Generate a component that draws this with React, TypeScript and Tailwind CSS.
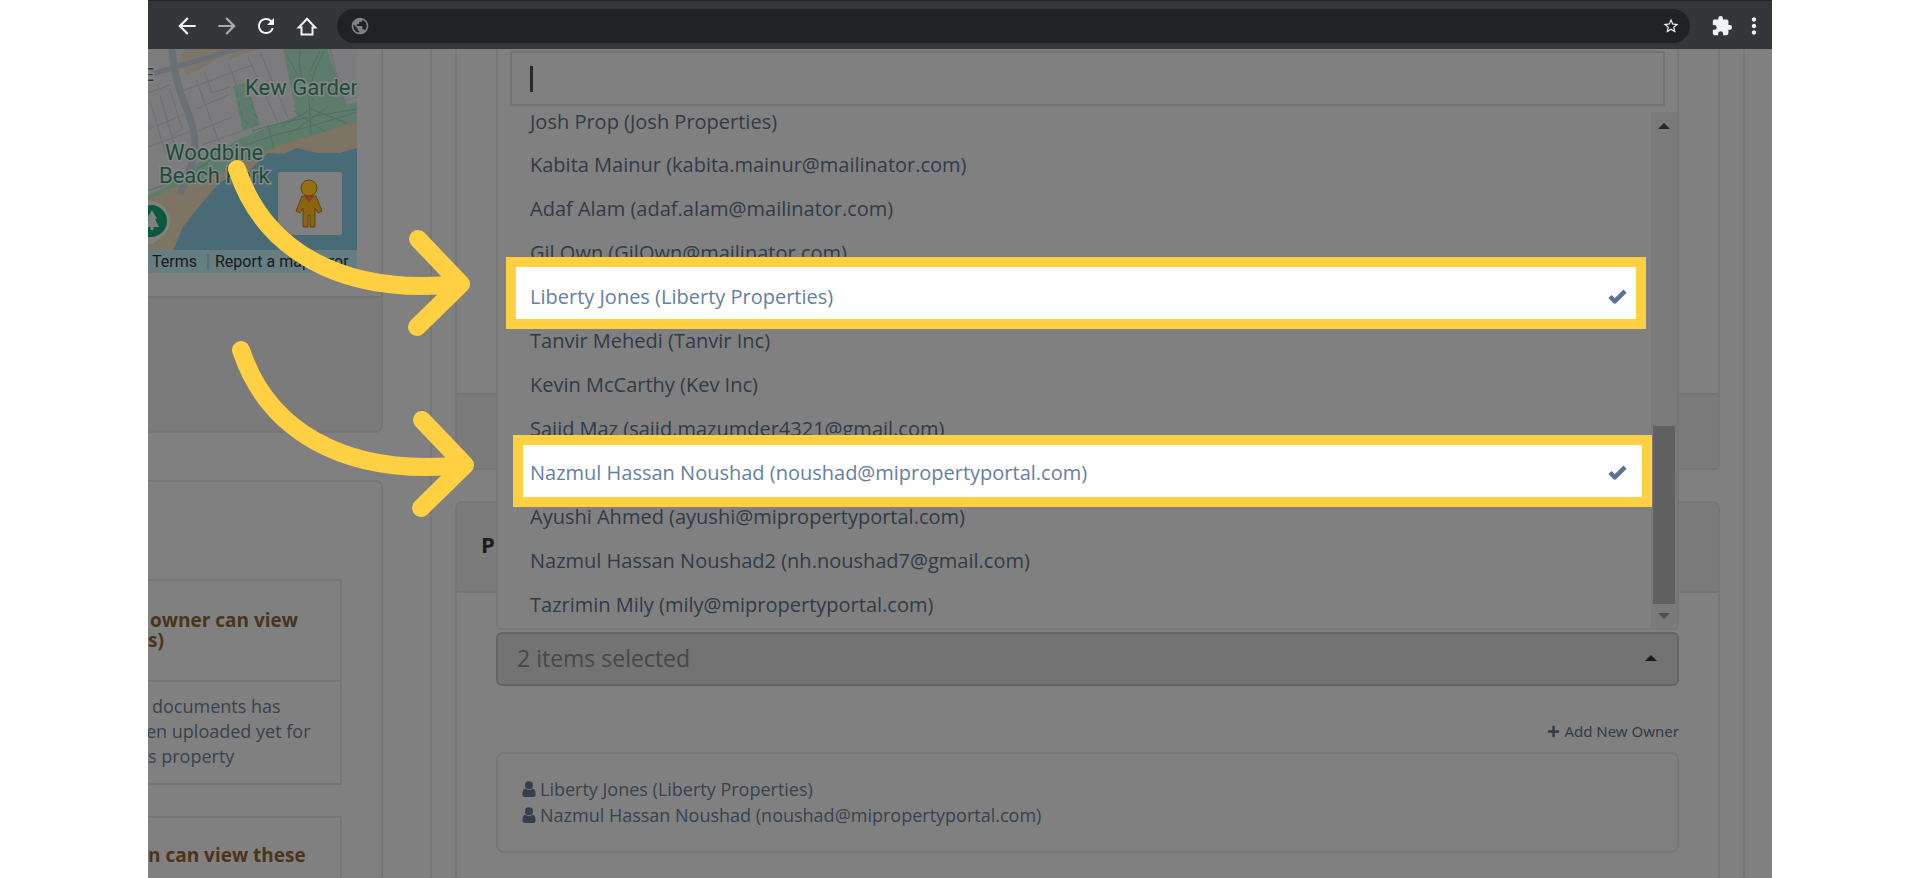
import React from 'react';
import { FaPlus } from 'react-icons/fa';
import { MdArrowBack, MdArrowForward, MdExtension, MdMoreVert, MdPublic, MdRefresh, MdStarBorder } from 'react-icons/md';

const owners = [
  { label: 'Josh Prop (Josh Properties)' },
  { label: 'Kabita Mainur (kabita.mainur@mailinator.com)' },
  { label: 'Adaf Alam (adaf.alam@mailinator.com)' },
  { label: 'Gil Own (GilOwn@mailinator.com)' },
  { label: 'Liberty Jones (Liberty Properties)', frame: '-top-[18px] -left-[8px] right-[5px]' },
  { label: 'Tanvir Mehedi (Tanvir Inc)' },
  { label: 'Kevin McCarthy (Kev Inc)' },
  { label: 'Sajid Maz (sajid.mazumder4321@gmail.com)' },
  { label: 'Nazmul Hassan Noushad (noushad@mipropertyportal.com)', frame: '-top-[16px] -left-px -right-px' },
  { label: 'Ayushi Ahmed (ayushi@mipropertyportal.com)' },
  { label: 'Nazmul Hassan Noushad2 (nh.noushad7@gmail.com)' },
  { label: 'Tazrimin Mily (mily@mipropertyportal.com)' },
];

const selected = owners.filter((o) => o.frame);

const UserIcon = () => (
  <svg viewBox="0 0 14 16" className="w-[14px] h-4 shrink-0" fill="#34404f" aria-hidden="true">
    <circle cx="7" cy="4.2" r="4" />
    <path d="M3.6 7.4C1 8 .4 10.6.4 13.2.4 14.9 1.500 16 3 16h8c1.500 0 2.600-1.100 2.600-2.800 0-2.600-.6-5.200-3.200-5.800C9.500 8.400 8.300 9 7 9s-2.500-.6-3.400-1.600z" />
  </svg>
);

const CheckIcon = () => (
  <svg viewBox="0 0 19 16" className="w-[19px] h-4 shrink-0" fill="none" stroke="#587396" strokeWidth="4.500" strokeLinejoin="round" aria-hidden="true">
    <path d="M2 7.500L6.800 12.300 17 2.200" />
  </svg>
);

const Toolbar = () => (
  <header className="flex items-center h-[49px] shrink-0 pt-0.5 pl-[26px] pr-[5px] bg-[#35363a] border-t border-[#202124] text-[#f1f3f4]">
    <div className="flex items-center gap-[14px]">
      <button aria-label="Back"><MdArrowBack size={26} /></button>
      <button aria-label="Forward" className="text-[#a9abae]"><MdArrowForward size={26} /></button>
      <button aria-label="Reload"><MdRefresh size={24} /></button>
      <button aria-label="Home" className="ml-0.5">
        <svg width="26" height="26" viewBox="0 0 26 26" fill="none" stroke="currentColor" strokeWidth="2">
          <path d="M4.800 14.500L13 5.700l8.200 8.800H18.500V21.500H7.500V14.500z" />
        </svg>
      </button>
    </div>
    <div className="flex items-center flex-1 h-[34px] ml-[17px] pl-[13px] pr-[10px] rounded-full bg-[#202124]">
      <MdPublic size={20} className="text-[#7d8084]" />
      <input aria-label="Address" className="flex-1 h-full px-2 bg-transparent outline-none" />
      <button aria-label="Bookmark"><MdStarBorder size={18} /></button>
    </div>
    <button aria-label="Extensions" className="ml-[21px]"><MdExtension size={22} /></button>
    <button aria-label="Menu" className="ml-2"><MdMoreVert size={26} /></button>
  </header>
);

const AreaMap = () => (
  <div className="relative w-[209px] h-[224px] overflow-hidden">
    <svg viewBox="0 0 209 224" className="w-full h-full" aria-label="Map">
      <rect width="209" height="224" fill="#7c7c7e" />
      <path d="M35 0L85 0 60 16 38 26 32 14zM90 0h20L78 12z" fill="#7d7668" />
      <g fill="#5d7c6b">
        <path d="M135 0h44l20 56 10-3v24l-44 11-40 12-66 30-59 22v-6l18-8 42-32 40-20 49-19z" />
        <path d="M85 37l14-4 13 43-17 6z" />
      </g>
      <path d="M209 73l-44 13-40 12-33 18-33 13-34 9-25 13v73h209z" fill="#7d7463" />
      <path d="M209 99l-17 5h-23l-20-5-14 6-15-1-18 17-30 12-18 21-19 24-10 24-8 22h192z" fill="#486b77" />
      <g fill="none" stroke="#6b7077">
        <path d="M24 0q2 30 14 58t8 50l-14 38" strokeWidth="7" />
        <path d="M0 26L110-6" strokeWidth="5" />
        <path d="M0 44l22-8M34 42l70-26M48 60l32-14M50 82l34-14M54 96l40-14M0 80l40-16M0 98l44-16" strokeWidth="1" />
        <path d="M2 52l16 54M12 46l16 56M22 40l12 40q-14 6-8 14l6 16M48 30l24 66M56 22l8 22 18-6M80 14l30 80M100 8l30 66M112 3l28 66M182 0l14 52 13-4" strokeWidth="1" />
      </g>
      <g fill="none" stroke="#4f705f" strokeWidth="1">
        <path d="M139 6l22 42 2 38M152 0q-4 30 14 52M176 2q-14 24-14 46M162 22l10-20M163 60l-30 18M163 60l36 14M120 76l6 24M104 82q30-10 105-22M140 86l40-28M176 82l-30-20M60 112q50-24 100-34l49-15M0 142q30-10 60-28" />
        <path d="M89 42q4 34 15 34t2-12l-8-28" strokeDasharray="6 4" />
      </g>
      <g fill="#1c4d3a" stroke="#858786" strokeWidth="3" paintOrder="stroke" className="font-['Roboto'] text-[22px]">
        <text x="97" y="46">Kew Garden</text>
        <text x="17" y="111">Woodbine</text>
        <text x="11" y="134">Beach Park</text>
        <text x="-4" y="32" fill="#33363b" className="text-[18px]">E</text>
      </g>
      <path d="M3 152a20 20 0 0 1 14 33L3 196l-14-11a20 20 0 0 1 14-33z" fill="#808080" />
      <circle cx="3" cy="172" r="16" fill="#0b5a40" />
      <path d="M4 161l5 9H7l4 8H5.500v3h-3v-3H-3l4-8h-2z" fill="#808080" />
      <rect x="130" y="123" width="64" height="63" rx="2" fill="#808080" />
      <g stroke="#5c4510" strokeWidth="1">
        <path d="M154 147h14l6 15-4 2-3-5v19h-5v-12h-2v12h-5v-19l-3 5-4-2z" fill="#8a6410" />
        <circle cx="161" cy="139" r="8" fill="#94700f" />
      </g>
      <path d="M156 147h10l-5 7z" fill="#8a3f1a" />
    </svg>
    <div className="absolute inset-x-0 bottom-0 flex h-[23px] items-center bg-[#667d82] font-['Roboto'] text-base leading-none text-[#1a1a1a]">
      <a href="#" className="w-[59px] pl-1">Terms</a>
      <a href="#" className="flex-1 pl-1.5 border-l-2 border-[#52727c] whitespace-nowrap">Report a map error</a>
    </div>
  </div>
);

const Sidebar = () => (
  <aside className="w-[235px] shrink-0 overflow-hidden">
    <section className="border-r-2 border-b-2 border-[#767676] rounded-br-lg">
      <AreaMap />
      <div className="h-[135px] mt-[23px] border-t-2 border-[#747474] bg-[#7b7b7b] rounded-br-lg" />
    </section>
    <section className="h-[600px] mt-[47px] pt-[97px] border-t-2 border-r-2 border-[#767676] rounded-tr-lg">
      <div className="w-[194px] border-2 border-l-0 border-[#757575]">
        <h3 className="h-[101px] pt-[29px] border-b-2 border-[#757575] text-[19px] leading-5 font-bold text-[#493518] whitespace-nowrap">
          <span className="block pl-0.5">owner can view</span>
          s)
        </h3>
        <p className="h-[101px] pt-3 text-lg leading-[25px] text-[#37424f] whitespace-nowrap">
          <span className="block pl-1">documents has</span>
          <span className="block -ml-0.5">en uploaded yet for</span>
          s property
        </p>
      </div>
      <div className="w-[194px] h-[200px] mt-[31px] pt-[27px] border-2 border-l-0 border-[#757575]">
        <h3 className="text-[19px] leading-5 font-bold text-[#493518] whitespace-nowrap">n can view these</h3>
      </div>
    </section>
  </aside>
);

const OwnerList = () => (
  <div className="absolute inset-x-[41px] top-0 flex flex-col h-[581px] border-2 border-t-0 border-[#767777] rounded-b-md bg-[#808080]">
    <input aria-label="Search owners" className="h-[55px] mt-[2px] mx-3 px-4 border-2 border-[#727374] outline-none" />
    <span className="absolute left-[32px] top-[17px] w-[3px] h-[26px] bg-[#2a2a2a]" />
    <div className="flex flex-1 min-h-0 mt-[6px]">
      <ul className="flex flex-col flex-1 justify-end pl-4 pb-px">
        {owners.map((o, i) => (
          <li key={o.label} className={i === 0 ? 'h-[32px]' : 'relative h-11'}>
            {o.frame && <span className={`absolute z-10 h-[72px] border-[10px] border-[#ffd042] bg-white ${o.frame}`} />}
            <button
              className={`flex items-center justify-between w-full pl-4 pr-6 text-xl whitespace-nowrap ${
                i === 0 ? 'h-[20px]' : 'h-11'
              } ${o.frame ? 'relative z-20 text-[#6680a0]' : 'text-[#303b48]'}`}
            >
              {o.label}
              {o.frame && <CheckIcon />}
            </button>
          </li>
        ))}
      </ul>
      <div className="flex flex-col items-center w-[26px] bg-[#7a7a7a] rounded-br-md">
        <span className="mt-[11px] border-x-[6px] border-x-transparent border-b-[6px] border-b-[#262626]" />
        <span className="w-[22px] h-[178px] mt-auto bg-[#616161]" />
        <span className="mt-[9px] mb-[9px] border-x-[6px] border-x-transparent border-t-[6px] border-t-[#505050]" />
      </div>
    </div>
  </div>
);

const OwnersPanel = () => (
  <main className="relative flex-1 min-w-0 ml-[47px] mr-[27px] px-[23px] border-x-2 border-[#777777]">
    <div className="relative">
      <section className="h-[421px] flex flex-col justify-end border-2 border-t-0 border-[#777777] rounded-b-md">
        <div className="h-[75px] border-t-2 border-[#757575] bg-[#7b7b7b]" />
      </section>
      <section className="h-[500px] mt-[31px] border-2 border-[#777777] rounded-t-lg">
        <h2 className="flex items-center h-[90px] pl-6 pb-1.5 border-b-2 border-[#757575] bg-[#7b7b7b] rounded-t-lg text-[22px] font-bold text-[#1c1c1c]">
          P
        </h2>
        <div className="px-[39px] pt-[39px]">
          <button className="flex items-center justify-between w-full h-[54px] pl-[19px] pr-5 pb-0.5 border-2 border-[#646464] rounded-md bg-[#737373] text-[23px] text-[#474747]">
            2 items selected
            <span className="border-x-[6px] border-x-transparent border-b-[6px] border-b-[#1a1a1a]" />
          </button>
          <div className="flex justify-end mt-[33px]">
            <a href="#" className="flex items-center gap-1 h-6 text-[15px] font-['Noto_Sans',sans-serif] text-[#303b48]">
              <FaPlus size={13} />
              Add New Owner
            </a>
          </div>
          <ul className="h-[101px] mt-[9px] pt-[22px] pl-6 border-2 border-[#767676] rounded-lg text-lg leading-[26px] text-[#37424f]">
            {selected.map((o) => (
              <li key={o.label} className="flex items-center gap-1">
                <UserIcon />
                {o.label}
              </li>
            ))}
          </ul>
        </div>
      </section>
      <OwnerList />
    </div>
  </main>
);

const Arrow: React.FC<{ className: string }> = ({ className }) => (
  <svg
    viewBox="0 0 260 200"
    className={`absolute z-30 w-[260px] h-[200px] ${className}`}
    fill="none"
    stroke="#ffd042"
    strokeWidth="18"
    strokeLinecap="round"
    strokeLinejoin="round"
    aria-hidden="true"
  >
    <path d="M17 19C42 95 115 147 240 134" />
    <path d="M198 89L241 134 197 177" />
  </svg>
);

export default function App() {
  return (
    <div className="h-screen px-[148px] overflow-hidden bg-white font-['Open_Sans',sans-serif]">
      <div className="flex flex-col h-full overflow-hidden bg-[#808080]">
        <Toolbar />
        <div className="relative flex flex-1 min-h-0 overflow-hidden">
          <Sidebar />
          <OwnersPanel />
          <Arrow className="left-[72px] top-[101px]" />
          <Arrow className="left-[76px] top-[282px]" />
        </div>
      </div>
    </div>
  );
}
